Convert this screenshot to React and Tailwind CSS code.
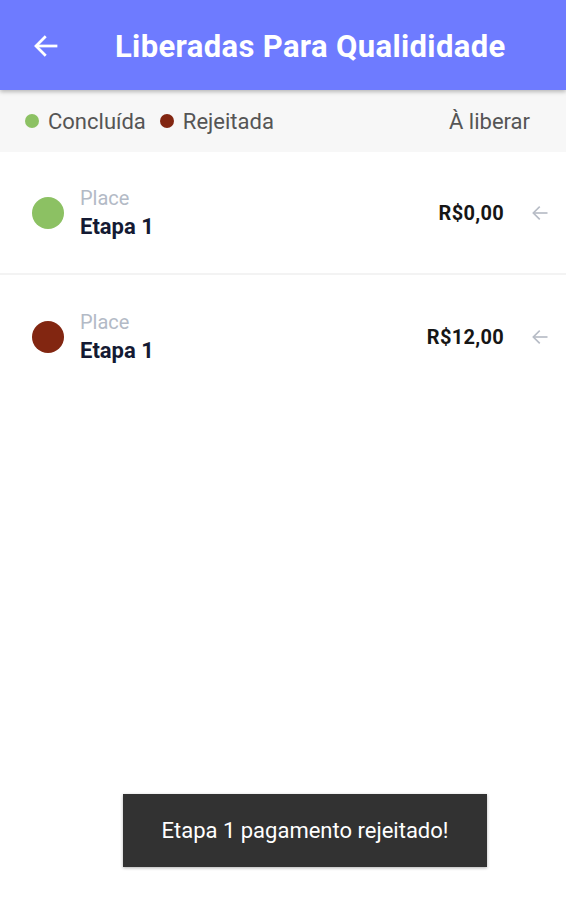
import React from 'react';

const font = { fontFamily: 'Roboto, "Liberation Sans", sans-serif' };

const Arrow = ({ className, width = 2.5 }) => (
  <svg viewBox="0 0 24 24" className={className} fill="none" stroke="currentColor" strokeWidth={width} strokeLinecap="square">
    <path d="M20 12H5" />
    <path d="M11 5l-7 7 7 7" />
  </svg>
);

const items = [
  { color: 'bg-[#8cc163]', place: 'Place', name: 'Etapa 1', value: 'R$0,00' },
  { color: 'bg-[#822611]', place: 'Place', name: 'Etapa 1', value: 'R$12,00' },
];

const Row = ({ item, last }) => (
  <div className={`flex items-center h-[123px] pl-[32px] pr-[16px] ${last ? '' : 'border-b-2 border-[#f3f3f3]'}`}>
    <div className={`w-[32px] h-[32px] rounded-full ${item.color}`} />
    <div className="flex flex-col ml-[16px] mt-[2px] flex-1">
      <span className="text-[20px] leading-[27px] text-[#b3bac6]">{item.place}</span>
      <span className="text-[22px] leading-[30px] font-bold text-[#141a33]">{item.name}</span>
    </div>
    <span className="text-[20px] font-bold text-[#161616] tracking-[0.3px]">{item.value}</span>
    <Arrow className="w-[20px] h-[20px] ml-[26px] text-[#b7bcc6]" width={2} />
  </div>
);

const App = () => {
  return (
    <div className="relative w-[566px] h-[900px] bg-white overflow-hidden" style={font}>
      <div className="flex items-center h-[90px] bg-[#6e7bff] shadow-[0_2px_4px_rgba(0,0,0,0.25)] relative z-10">
        <Arrow className="w-[30px] h-[30px] ml-[31px] mt-[2px] text-white" width={2.2} />
        <h1 className="ml-[54px] mt-[4px] text-[31px] font-bold text-white tracking-[0.35px]">Liberadas Para Qualididade</h1>
      </div>
      <div className="flex items-center h-[62px] bg-[#f7f7f7] pl-[25px] pr-[36px] text-[22px] text-[#555555]">
        <div className="w-[14px] h-[14px] rounded-full bg-[#8cc163]" />
        <span className="ml-[9px]">Concluída</span>
        <div className="w-[14px] h-[14px] rounded-full bg-[#822611] ml-[14px]" />
        <span className="ml-[9px]">Rejeitada</span>
        <span className="ml-auto">À liberar</span>
      </div>
      <div className="flex flex-col">
        {items.map((item, i) => (
          <Row key={i} item={item} last={i === items.length - 1} />
        ))}
      </div>
      <div className="absolute left-[123px] top-[794px] w-[364px] h-[73px] bg-[#323232] flex items-center justify-center shadow-[0_1px_3px_rgba(0,0,0,0.3)]">
        <span className="text-[22px] text-white">Etapa 1 pagamento rejeitado!</span>
      </div>
    </div>
  );
};

export default App;
